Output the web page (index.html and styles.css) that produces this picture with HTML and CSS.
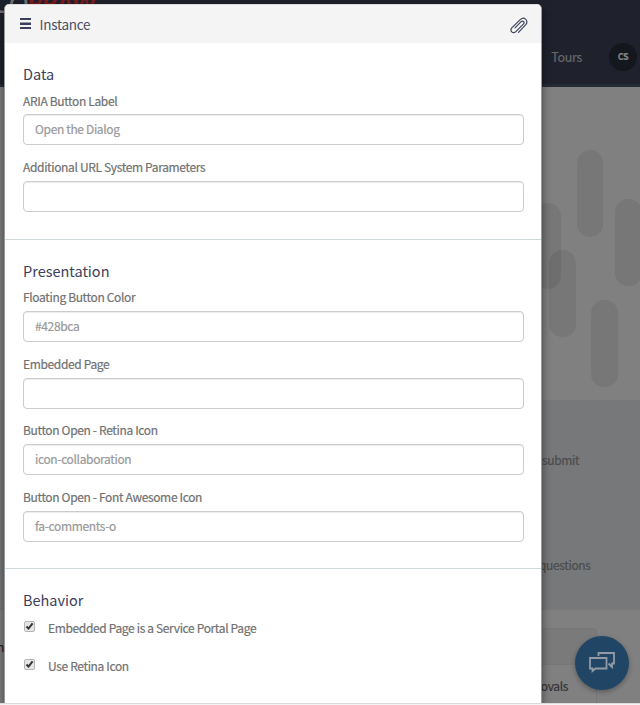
FILE: index.html
```
<!DOCTYPE html>
<html lang="en">
<head>
<meta charset="utf-8">
<title>Instance</title>
<link rel="stylesheet" href="styles.css">
</head>
<body>
<div class="page">
  <div class="backdrop">
    <header class="topbar">
      <span class="brand"><span class="brand-co">CO</span><span class="brand-red">RRAW</span></span>
      <span class="tours">Tours</span>
      <span class="avatar">CS</span>
    </header>
    <section class="hero">
      <svg width="640" height="313" viewBox="0 87 640 313">
        <g fill="#000" fill-opacity=".07">
          <rect x="577" y="150" width="26" height="87" rx="13"/>
          <rect x="535" y="203" width="26" height="86" rx="13"/>
          <rect x="549" y="250" width="27" height="87" rx="13"/>
          <rect x="615" y="199" width="27" height="87" rx="13"/>
          <rect x="591" y="300" width="27" height="87" rx="13"/>
        </g>
      </svg>
    </section>
    <section class="links">
      <p class="link-a">submit</p>
      <p class="link-b">questions</p>
    </section>
    <section class="lower">
      <span class="edge-text">n</span>
      <div class="card"><div class="card-head"></div><p>Approvals</p></div>
    </section>
  </div>
  <button class="chat" aria-label="Open the Dialog">
    <svg width="28" height="22" viewBox="0 0 28 22" fill="none" stroke="#929ba5" stroke-width="1.800">
      <path d="M10.500 5V2H26V12.500H24V16L20.500 12.500"/>
      <path d="M2 7H18.500V17.500H7.500L4.500 20V17.500H2Z"/>
    </svg>
  </button>
  <main class="modal">
    <header class="modal-head">
      <svg class="menu" width="11" height="12" viewBox="0 0 11 12"><path d="M0 0h11v2H0zM0 4.500h11v2.500H0zM0 9h11v2H0z" fill="#3b3f5c"/></svg>
      <h1>Instance</h1>
      <svg class="clip" width="18" height="17" viewBox="0 0 18 17" fill="none" stroke="#40465c" stroke-width="1.200" stroke-linecap="round"><path d="M8.500 15.300L15.800 7.600C17.300 6 17.300 3.500 15.600 2.100C14 .7 11.900 1 10.500 2.400L2 10.600C.8 11.900.7 13.700 1.800 14.900C3 16.100 4.800 15.800 5.900 14.700L13.300 7.200C14.200 6.200 14.200 5.200 13.500 4.500C12.700 3.800 11.700 4 10.900 4.800L5 10.800"/></svg>
    </header>
    <section class="group data">
      <h2>Data</h2>
      <label class="first">ARIA Button Label<input type="text" placeholder="Open the Dialog"></label>
      <label>Additional URL System Parameters<input type="text"></label>
    </section>
    <section class="group presentation">
      <h2>Presentation</h2>
      <label>Floating Button Color<input type="text" placeholder="#428bca"></label>
      <label>Embedded Page<input type="text"></label>
      <label>Button Open - Retina Icon<input type="text" placeholder="icon-collaboration"></label>
      <label>Button Open - Font Awesome Icon<input type="text" placeholder="fa-comments-o"></label>
    </section>
    <section class="group behavior">
      <h2>Behavior</h2>
      <div class="check"><svg width="11" height="11" viewBox="0 0 11 11"><rect x=".5" y=".5" width="10" height="10" rx="1.500" fill="#e6e6e6" stroke="#b4b4b4"/><path d="M2.500 5.500L4.500 7.600L8.600 2.400" fill="none" stroke="#333" stroke-width="2"/></svg><span>Embedded Page is a Service Portal Page</span></div>
      <div class="check"><svg width="11" height="11" viewBox="0 0 11 11"><rect x=".5" y=".5" width="10" height="10" rx="1.500" fill="#e6e6e6" stroke="#b4b4b4"/><path d="M2.500 5.500L4.500 7.600L8.600 2.400" fill="none" stroke="#333" stroke-width="2"/></svg><span>Use Retina Icon</span></div>
    </section>
  </main>
  <div class="bottom-line"></div>
</div>
</body>
</html>
```
FILE: styles.css
```
* { box-sizing: border-box; }
body { margin: 0; font-family: "Noto Sans CJK SC", "Noto Sans", sans-serif; font-size: 12px; letter-spacing: -.35px; -webkit-text-stroke: .2px; color: #717171; }
.page { position: relative; width: 640px; height: 705px; overflow: hidden; background: #808080; }
.backdrop { height: 705px; }
h1, h2, p { margin: 0; font-weight: 400; }
.topbar { height: 87px; background: #1f222c; border-bottom: 3px solid #242c36; position: relative; display: flex; justify-content: flex-end; align-items: center; padding: 30px 3px 0 0; }
.brand { position: absolute; left: -6px; top: -9px; font: italic 26px/24px "Lato", sans-serif; letter-spacing: -1px; }
.brand-co { color: #77777a; }
.brand-red { color: #85191d; font-weight: 700; }
.tours { font-size: 12.500px; color: #66676b; margin: -2px 27px 0 0; }
.avatar { width: 28px; height: 28px; border-radius: 50%; background: #15171e; color: #858585; font-size: 9px; font-weight: 700; display: flex; align-items: center; justify-content: center; padding-bottom: 1px; }
.hero { height: 313px; background: #808080; }
.hero svg { display: block; }
.links { height: 210px; background: #77787a; padding: 50px 0 0 542px; color: #4b4b4b; line-height: 20px; }
.link-b { margin: 85px 0 0 -3px; }
.lower { height: 95px; display: flex; justify-content: space-between; padding: 18px 43px 0 0; background: #808080; }
.edge-text { margin: 11px 0 0 -3px; color: #222; line-height: 16px; }
.card { width: 120px; border: 1px solid #777; border-bottom: 0; border-radius: 4px 4px 0 0; color: #333; }
.card-head { height: 36px; background: #7a7a7a; border-bottom: 1px solid #777; }
.card p { text-align: right; padding: 11px 28px 0 0; line-height: 20px; }
.chat { position: absolute; left: 575px; top: 636px; width: 54px; height: 54px; padding: 0; border: 0; border-radius: 50%; background: #214565; box-shadow: 0 2px 5px rgba(0,0,0,.3); display: flex; align-items: center; justify-content: center; }
.chat svg { position: relative; top: -1px; }
.modal { position: absolute; left: 4px; top: 4px; width: 538px; height: 699px; background: #fff; border: 1px solid #999; border-top-color: #ddd; border-bottom: 0; border-radius: 5px 5px 0 0; box-shadow: 0 3px 10px rgba(0,0,0,.5); overflow: hidden; }
.modal-head { height: 38px; background: #f4f4f4; display: flex; align-items: center; padding: 0 14px 0 15px; }
.modal-head h1 { font-size: 13.500px; line-height: 20px; color: #4b4f66; margin: -1px 0 0 8.500px; flex: 1; letter-spacing: -.25px; -webkit-text-stroke: 0; }
.clip { margin: 3px -1px 0 0; }
.group { padding: 20px 16px 0 18px; border-bottom: 1px solid #cfd9dc; }
.data { height: 197px; }
.presentation { height: 329px; }
.behavior { border: 0; }
h2 { font-size: 14.500px; line-height: 22px; color: #3d4059; letter-spacing: 0; -webkit-text-stroke: 0; }
label { display: block; line-height: 20px; height: 66.700px; padding-top: 5px; }
label.first { padding-top: 6px; height: 67px; }
label.first input { margin-top: 3px; }
input { display: block; width: 501px; height: 31px; margin: 4px 0 0; border: 1px solid #ccc; border-radius: 4px; padding: 0 11px 2px; font: inherit; letter-spacing: inherit; background: #fff; box-shadow: inset 0 1px 1px rgba(0,0,0,.075); }
input::placeholder { color: #999; opacity: 1; }
.check { display: flex; gap: 13px; height: 38px; line-height: 20px; padding: 7px 0 0 1px; }
.check svg { margin-top: 3px; }
.bottom-line { position: absolute; left: 0; top: 703px; width: 640px; height: 2px; background: linear-gradient(#dcdcdc 50%, #f4f4f4 50%); }
```
